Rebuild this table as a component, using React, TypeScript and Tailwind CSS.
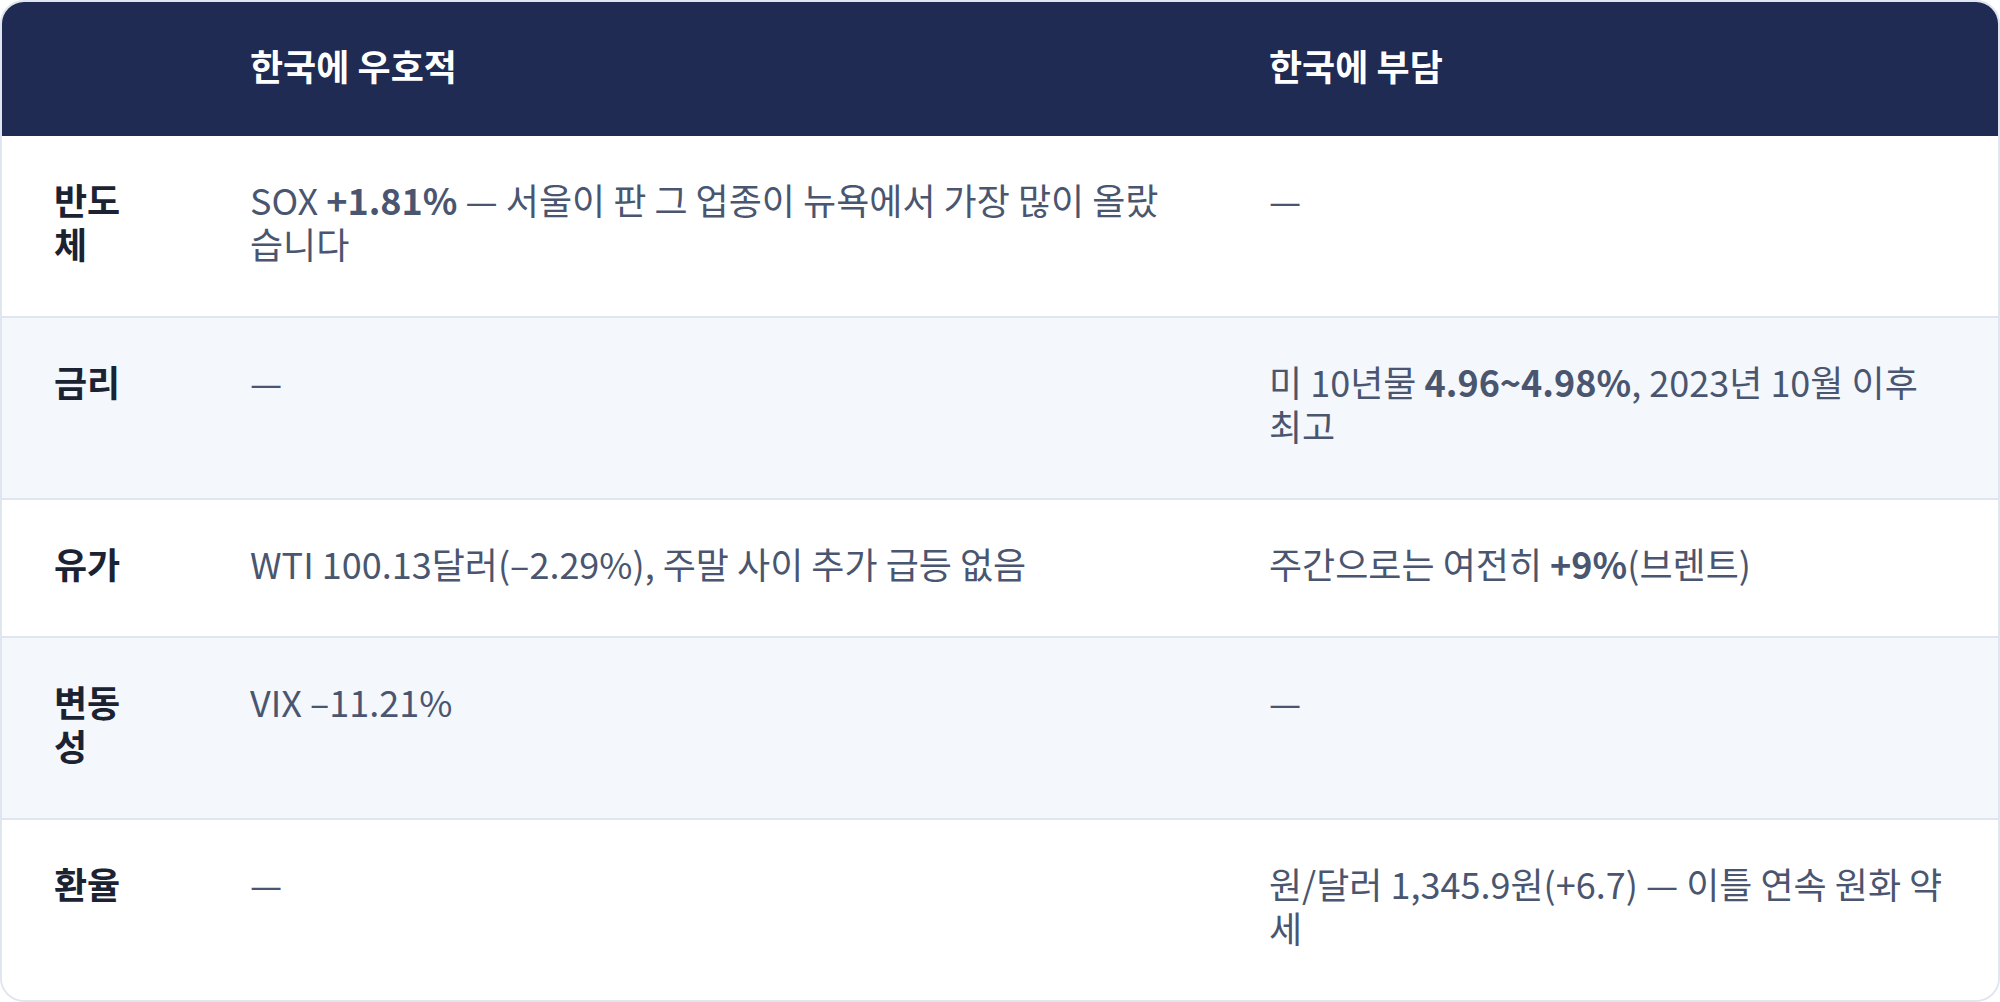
import type { ReactNode } from "react";

type Row = {
  label: string;
  good: ReactNode;
  bad: ReactNode;
};

const rows: Row[] = [
  {
    label: "반도체",
    good: (
      <>
        SOX <strong className="font-bold">+1.81%</strong> — 서울이 판 그 업종이 뉴욕에서 가장 많이 올랐습니다
      </>
    ),
    bad: "—",
  },
  {
    label: "금리",
    good: "—",
    bad: (
      <>
        미 10년물 <strong className="font-bold">4.96~4.98%</strong>, 2023년 10월 이후 최고
      </>
    ),
  },
  {
    label: "유가",
    good: "WTI 100.13달러(–2.29%), 주말 사이 추가 급등 없음",
    bad: (
      <>
        주간으로는 여전히 <strong className="font-bold">+9%</strong>(브렌트)
      </>
    ),
  },
  {
    label: "변동성",
    good: "VIX –11.21%",
    bad: "—",
  },
  {
    label: "환율",
    good: "—",
    bad: "원/달러 1,345.9원(+6.7) — 이틀 연속 원화 약세",
  },
];

export default function App() {
  return (
    <div className="min-h-screen bg-white font-['Noto_Sans_CJK_KR',sans-serif]">
      <div className="overflow-hidden rounded-[24px] border-2 border-[#dfe6f0] bg-white">
        <table className="w-full table-fixed border-collapse text-left text-[36px] leading-[44px]">
          <colgroup>
            <col className="w-[196px]" />
            <col className="w-[1019px]" />
            <col />
          </colgroup>
          <thead>
            <tr className="bg-[#1f2b53] text-white">
              <th className="px-[52px] pb-[49px] pt-[41px] font-bold" />
              <th className="px-[52px] pb-[49px] pt-[41px] font-bold">한국에 우호적</th>
              <th className="px-[52px] pb-[49px] pt-[41px] font-bold">한국에 부담</th>
            </tr>
          </thead>
          <tbody>
            {rows.map((row, i) => (
              <tr
                key={row.label}
                className={
                  (i % 2 === 1 ? "bg-[#f4f7fc]" : "bg-white") +
                  (i > 0 ? " border-t-2 border-[#dfe6f0]" : "")
                }
              >
                <td className="px-[52px] pb-[51px] pt-[41px] align-top font-bold text-[#1b2333]">
                  {row.label}
                </td>
                <td className="px-[52px] pb-[51px] pt-[41px] align-top text-[#4a5670]">
                  {row.good}
                </td>
                <td className="px-[52px] pb-[51px] pt-[41px] align-top text-[#4a5670]">
                  {row.bad}
                </td>
              </tr>
            ))}
          </tbody>
        </table>
      </div>
    </div>
  );
}
